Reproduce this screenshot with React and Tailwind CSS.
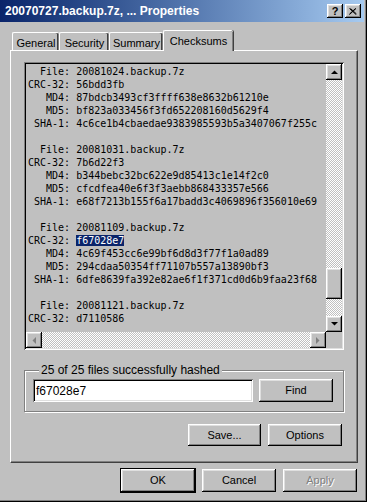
import React from 'react'

const raised = 'shadow-[inset_-1px_-1px_#000,inset_1px_1px_#fff,inset_-2px_-2px_#808080,inset_2px_2px_#dfdfdf]'
const sunken = 'shadow-[inset_1px_1px_#808080,inset_-1px_-1px_#fff,inset_2px_2px_#000,inset_-2px_-2px_#dfdfdf]'
const dither = 'bg-[image:repeating-conic-gradient(#c0c0c0_0%_25%,#ffffff_0%_50%)] bg-[length:2px_2px]'

const entries = [
  {
    file: '20081024.backup.7z',
    crc: '56bdd3fb',
    md4: '87bdcb3493cf3ffff638e8632b61210e',
    md5: 'bf823a033456f3fd652208160d5629f4',
    sha: '4c6ce1b4cbaedae9383985593b5a3407067f255c',
  },
  {
    file: '20081031.backup.7z',
    crc: '7b6d22f3',
    md4: 'b344bebc32bc622e9d85413c1e14f2c0',
    md5: 'cfcdfea40e6f3f3aebb868433357e566',
    sha: 'e68f7213b155f6a17badd3c4069896f356010e69',
  },
  {
    file: '20081109.backup.7z',
    crc: 'f67028e7',
    md4: '4c69f453cc6e99bf6d8d3f77f1a0ad89',
    md5: '294cdaa50354ff71107b557a13890bf3',
    sha: '6dfe8639fa392e82ae6f1f371cd0d6b9faa23f68',
    selected: true,
  },
  { file: '20081121.backup.7z', crc: 'd7110586' },
]

function Arrow({ dir, disabled }) {
  const pts = {
    up: '0,4 7,4 3.5,0.5',
    down: '0,0 7,0 3.5,3.5',
    left: '4,0 4,7 0.5,3.5',
    right: '0,0 0,7 3.5,3.5',
  }[dir]
  const vertical = dir === 'up' || dir === 'down'
  return (
    <svg width={vertical ? 7 : 4} height={vertical ? 4 : 7} viewBox={vertical ? '0 0 7 4' : '0 0 4 7'}>
      <polygon points={pts} fill={disabled ? '#808080' : '#000'} />
    </svg>
  )
}

function ScrollButton({ dir, disabled }) {
  return (
    <div className={`w-[16px] h-[16px] shrink-0 bg-[#c0c0c0] flex items-center justify-center ${raised}`}>
      <Arrow dir={dir} disabled={disabled} />
    </div>
  )
}

function Button({ children, className = '', disabled, isDefault }) {
  return (
    <div
      className={`flex items-center justify-center bg-[#c0c0c0] text-[11px] ${raised} ${
        isDefault ? 'outline outline-1 outline-black' : ''
      } ${disabled ? 'text-[#808080] [text-shadow:1px_1px_#fff]' : 'text-black'} ${className}`}
    >
      {children}
    </div>
  )
}

function Tab({ label, width, selected }) {
  if (selected) {
    return (
      <div
        className={`${width} h-[21px] -mb-[1px] relative z-10 bg-[#c0c0c0] border-l border-t border-white rounded-tl-[2px] rounded-tr-[2px] shadow-[inset_-1px_0_#808080,1px_0_#404040] flex justify-center pt-[2px] text-[11px]`}
      >
        {label}
      </div>
    )
  }
  return (
    <div
      className={`${width} h-[18px] bg-[#c0c0c0] border-l border-t border-white rounded-tl-[2px] rounded-tr-[2px] shadow-[inset_-1px_0_#808080,inset_-2px_0_#404040] flex justify-center pt-[2px] text-[11px]`}
    >
      {label}
    </div>
  )
}

function Line({ label, children }) {
  return (
    <div className="h-[13px]">
      {label}
      {children}
    </div>
  )
}

export default function App() {
  return (
    <div
      className="w-[367px] h-[502px] bg-[#c0c0c0] flex flex-col overflow-hidden shadow-[inset_-1px_-1px_#000,inset_-2px_-2px_#808080] text-black"
      style={{ fontFamily: '"Liberation Sans", Arial, sans-serif' }}
    >
      {/* title bar */}
      <div className="w-[364px] h-[22px] bg-linear-to-r from-[#0a246a] to-[#a6caf0] flex items-center pl-[5px] pr-[3px]">
        <span className="text-white font-bold text-[12px] flex-1">20070727.backup.7z, ... Properties</span>
        <div className={`w-[16px] h-[14px] bg-[#c0c0c0] ${raised} flex items-center justify-center text-[11px] font-bold leading-none`}>
          ?
        </div>
        <div className={`w-[16px] h-[14px] ml-[2px] bg-[#c0c0c0] ${raised} flex items-center justify-center`}>
          <svg width="8" height="7" viewBox="0 0 8 7">
            <path d="M0.5 0.5 L7 6.5 M1.5 0.5 L7.5 6 M7 0.5 L0.5 6.5 M6.5 0.5 L0.5 6" stroke="#000" strokeWidth="1" />
          </svg>
        </div>
      </div>

      <div className="pl-[10px] flex flex-col">
        {/* tabs */}
        <div className="h-[20px] mt-[8px] flex items-end pl-[2px]">
          <Tab label="General" width="w-[47px]" />
          <Tab label="Security" width="w-[50px]" />
          <Tab label="Summary" width="w-[54px]" />
          <Tab label="Checksums" width="w-[70px]" selected />
        </div>

        {/* tab panel */}
        <div className="w-[348px] h-[413px] border-l border-t border-white border-r border-b border-r-[#404040] border-b-[#404040] shadow-[inset_-1px_-1px_#808080] pl-[13px] pt-[11px] flex flex-col">
          {/* checksum list */}
          <div className={`w-[320px] h-[288px] p-[2px] bg-[#c0c0c0] ${sunken} flex flex-col`}>
            <div className="flex flex-1 min-h-0">
              <div
                className="flex-1 overflow-hidden whitespace-pre pl-[2px] pt-[1px] text-[10px] leading-[13px] text-black"
                style={{ fontFamily: '"DejaVu Sans Mono", "Liberation Mono", monospace' }}
              >
                {entries.map((e, i) => (
                  <div key={i}>
                    <Line label="  File: ">{e.file}</Line>
                    <Line label="CRC-32: ">
                      {e.selected ? <span className="bg-[#0a246a] text-white">{e.crc}</span> : e.crc}
                    </Line>
                    {e.md4 && <Line label="   MD4: ">{e.md4}</Line>}
                    {e.md5 && <Line label="   MD5: ">{e.md5}</Line>}
                    {e.sha && <Line label=" SHA-1: ">{e.sha}</Line>}
                    {e.md4 && <div className="h-[13px]" />}
                  </div>
                ))}
              </div>
              {/* vertical scrollbar */}
              <div className="w-[16px] flex flex-col">
                <ScrollButton dir="up" />
                <div className={`h-[188px] ${dither}`} />
                <div className={`h-[31px] bg-[#c0c0c0] ${raised}`} />
                <div className={`flex-1 ${dither}`} />
                <ScrollButton dir="down" />
              </div>
            </div>
            {/* horizontal scrollbar */}
            <div className="h-[16px] flex">
              <ScrollButton dir="left" disabled />
              <div className={`flex-1 ${dither}`} />
              <ScrollButton dir="right" disabled />
              <div className="w-[16px] bg-[#c0c0c0]" />
            </div>
          </div>

          {/* group box */}
          <fieldset className="w-[320px] mt-[14px] border border-[#808080] shadow-[inset_1px_1px_#fff,1px_1px_#fff] pl-[8px] pb-[9px]">
            <legend className="ml-[6px] px-[2px] text-[12px] leading-[13px] bg-[#c0c0c0]">
              25 of 25 files successfully hashed
            </legend>
            <div className="flex gap-[6px] mt-[2px]">
              <div className={`w-[220px] h-[23px] bg-white ${sunken} flex items-center pl-[3px] text-[12px]`}>
                f67028e7
              </div>
              <Button className="w-[74px] h-[23px]">Find</Button>
            </div>
          </fieldset>

          <div className="w-[320px] mt-[12px] pr-[2px] flex justify-end gap-[7px]">
            <Button className="w-[73px] h-[22px]">Save...</Button>
            <Button className="w-[74px] h-[22px]">Options</Button>
          </div>
        </div>

        {/* dialog buttons */}
        <div className="w-[348px] mt-[6px] pr-[1px] flex justify-end gap-[7px]">
          <Button className="w-[74px] h-[23px]" isDefault>OK</Button>
          <Button className="w-[74px] h-[23px]">Cancel</Button>
          <Button className="w-[74px] h-[23px]" disabled>Apply</Button>
        </div>
      </div>
    </div>
  )
}
